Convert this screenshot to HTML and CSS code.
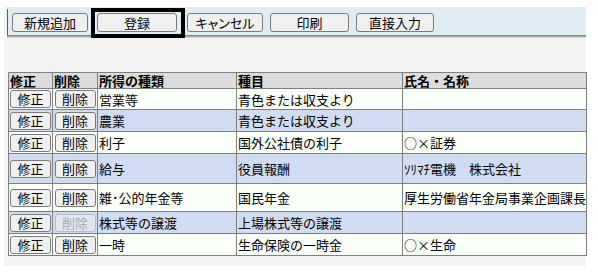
FILE: index.html
```html
<!DOCTYPE html>
<html lang="ja">
<head>
<meta charset="utf-8">
<title>所得一覧</title>
<link rel="stylesheet" href="styles.css">
</head>
<body>
<div class="page">
  <div class="toolbar">
    <div class="toolbar-body">
      <button class="tbtn w76">新規追加</button>
      <button class="tbtn w80 focused">登録</button>
      <button class="tbtn w76 palt">キャンセル</button>
      <button class="tbtn w79">印刷</button>
      <button class="tbtn w78">直接入力</button>
    </div>
  </div>

  <table class="list">
    <colgroup>
      <col class="c1"><col class="c2"><col class="c3"><col class="c4"><col class="c5">
    </colgroup>
    <thead>
      <tr class="head"><th>修正</th><th>削除</th><th>所得の種類</th><th>種目</th><th>氏名・名称</th></tr>
    </thead>
    <tbody>
      <tr class="odd r21"><td class="bc"><button class="rbtn">修正</button></td><td class="bc"><button class="rbtn">削除</button></td><td>営業等</td><td>青色または収支より</td><td></td></tr>
      <tr class="even r22"><td class="bc"><button class="rbtn">修正</button></td><td class="bc"><button class="rbtn">削除</button></td><td>農業</td><td>青色または収支より</td><td></td></tr>
      <tr class="odd r22"><td class="bc"><button class="rbtn">修正</button></td><td class="bc"><button class="rbtn">削除</button></td><td>利子</td><td>国外公社債の利子</td><td>○×証券</td></tr>
      <tr class="even r30"><td class="bc"><button class="rbtn">修正</button></td><td class="bc"><button class="rbtn">削除</button></td><td>給与</td><td>役員報酬</td><td>ｿﾘﾏﾁ電機　株式会社</td></tr>
      <tr class="odd r28"><td class="bc"><button class="rbtn">修正</button></td><td class="bc"><button class="rbtn">削除</button></td><td>雑･公的年金等</td><td>国民年金</td><td>厚生労働省年金局事業企画課長</td></tr>
      <tr class="even r22"><td class="bc"><button class="rbtn">修正</button></td><td class="bc"><button class="rbtn" disabled>削除</button></td><td>株式等の譲渡</td><td>上場株式等の譲渡</td><td></td></tr>
      <tr class="odd r22"><td class="bc"><button class="rbtn">修正</button></td><td class="bc"><button class="rbtn">削除</button></td><td>一時</td><td>生命保険の一時金</td><td>○×生命</td></tr>
    </tbody>
  </table>
</div>
</body>
</html>
```

FILE: styles.css
```css
* { box-sizing: border-box; }

body {
  margin: 0;
  background: #ffffff;
  font-family: "Noto Sans CJK JP", "Noto Sans", sans-serif;
  font-size: 13px;
  color: #000;
}

.page {
  margin: 7px 0 0 4px;
  width: 582px;
  background: #f3f3f3;
  padding-bottom: 10px;
}

.toolbar {
  margin-left: 3px;
  border-top: 2px solid #e8e8e8;
}

.toolbar-body {
  display: flex;
  align-items: flex-start;
  gap: 7px;
  height: 27px;
  padding: 4px 0 0 4px;
  background: #dfeef5;
  border-left: 1px solid #2a7a3a;
  border-bottom: 1px solid #8a8a8a;
  box-shadow: 0 1px 0 #a9a9a9, 0 2px 0 #d6d6d6;
}

.tbtn {
  height: 19px;
  padding: 0;
  font-family: "Noto Sans CJK JP", sans-serif;
  font-size: 13px;
  line-height: 17px;
  color: #000;
  background: #f0f0f0;
  border: 1px solid #7a7a7a;
  border-radius: 3px;
}

.palt { font-feature-settings: "palt"; }

.w76 { width: 76px; }
.w78 { width: 78px; }
.w79 { width: 79px; }
.w80 { width: 80px; }

.focused {
  position: relative;
  margin: 0 3px 0 2px;
}

.focused::after {
  content: "";
  position: absolute;
  top: -6px;
  left: -7px;
  right: -9px;
  bottom: -7px;
  border: 4px solid #000;
}

.list {
  margin: 36px 0 0 4px;
  width: 578px;
  table-layout: fixed;
  border-collapse: collapse;
  border: 1px solid #808080;
}

.c1 { width: 44px; }
.c2 { width: 45px; }
.c3 { width: 139px; }
.c4 { width: 166px; }
.c5 { width: 184px; }

.list th,
.list td {
  border: 1px solid #808080;
  padding: 0 1px;
  text-align: left;
  vertical-align: middle;
  font-size: 13px;
  line-height: 15px;
  white-space: nowrap;
  overflow: hidden;
}

.list th {
  background: #dcdcdc;
  font-weight: bold;
}

.head { height: 15px; }
.r21 { height: 21px; }
.r22 { height: 22px; }
.r28 { height: 28px; }
.r30 { height: 30px; }

.odd { background: #fafffa; }
.even { background: #d0dcf2; }

.list td.bc {
  padding: 0 1px;
  text-align: center;
}

.rbtn {
  display: block;
  width: 41px;
  height: 18px;
  margin: 0 auto;
  padding: 0;
  font-family: "Noto Sans CJK JP", sans-serif;
  font-size: 13px;
  line-height: 16px;
  color: #000;
  background: #f0f0f0;
  border: 1px solid #7a7a7a;
  border-radius: 3px;
}

.rbtn:disabled {
  color: #a4a8b0;
  background: #e2e7f1;
  border-color: #b4bac6;
}
```
